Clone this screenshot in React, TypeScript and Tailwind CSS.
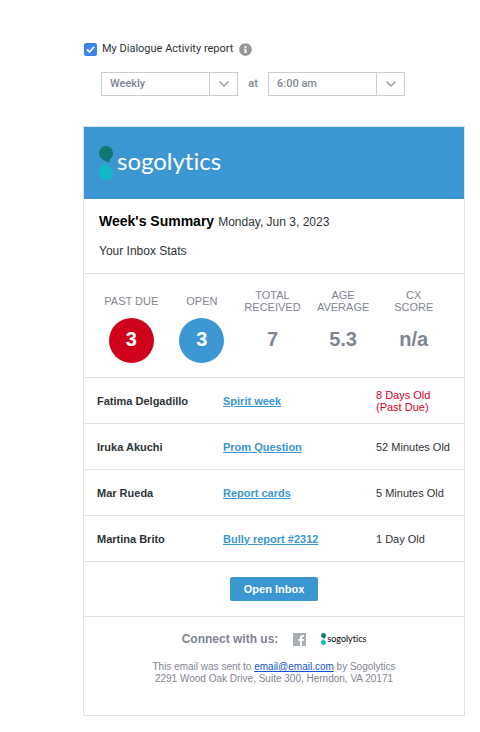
import React from "react";
import clsx from "clsx";
import { FaInfoCircle } from "react-icons/fa";

const stats = [
  { label: ["PAST DUE"], value: "3", badge: "bg-[#d0021b]" },
  { label: ["OPEN"], value: "3", badge: "bg-[#3c96d2]" },
  { label: ["TOTAL", "RECEIVED"], value: "7" },
  { label: ["AGE", "AVERAGE"], value: "5.3" },
  { label: ["CX", "SCORE"], value: "n/a" },
];

const tickets = [
  { name: "Fatima Delgadillo", subject: "Spirit week", age: "8 Days Old", pastDue: true },
  { name: "Iruka Akuchi", subject: "Prom Question", age: "52 Minutes Old" },
  { name: "Mar Rueda", subject: "Report cards", age: "5 Minutes Old" },
  { name: "Martina Brito", subject: "Bully report #2312", age: "1 Day Old" },
];

// Two speech bubbles, tails meeting in the middle
function LogoMark({ className }: { className?: string }) {
  return (
    <svg viewBox="0 0 14 34" className={className} aria-hidden="true">
      <path
        d="M7 0a7 7 0 0 1 7 7c0 3-1.400 5-3.200 6.300l-.3 3.200C7.500 16 5.200 15 3.300 13.100 1.200 11.600 0 9.600 0 7a7 7 0 0 1 7-7z"
        fill="#10786f"
      />
      <path
        d="M7 34a7 7 0 0 1-7-7c0-3 1.400-5 3.200-6.300l.3-3.200c3 .5 5.300 1.500 7.200 3.400C12.800 22.400 14 24.400 14 27a7 7 0 0 1-7 7z"
        fill="#10b9c6"
      />
    </svg>
  );
}

interface SelectProps {
  label: string;
  options: string[];
}

function Select({ label, options }: SelectProps) {
  return (
    <div className="relative w-[137px]">
      <select
        aria-label={label}
        className="block h-6 w-full appearance-none border border-[#cccccc] bg-white pl-2 pr-8 text-[11px] font-medium text-[#7f8592]"
      >
        {options.map((option) => (
          <option key={option}>{option}</option>
        ))}
      </select>
      <span className="pointer-events-none absolute inset-y-0 right-0 flex w-[29px] items-center justify-center border-l border-[#cccccc]">
        <svg viewBox="0 0 10 6" className="w-[10px]" fill="none" stroke="#8a8f99" strokeWidth="1.200">
          <path d="M.5.5 5 5 9.500.5" />
        </svg>
      </span>
    </div>
  );
}

function ReportSettings() {
  return (
    <form className="font-['Roboto',sans-serif]">
      <div className="flex h-[13px] items-center">
        <span className="relative flex">
          <input
            id="activity-report"
            type="checkbox"
            defaultChecked
            className="peer size-[13px] appearance-none rounded-xs border border-[#3b82f0] checked:bg-[#3f86ec]"
          />
          <svg
            viewBox="0 0 13 13"
            className="pointer-events-none absolute inset-0 hidden peer-checked:block"
            fill="none"
            stroke="#fff"
            strokeWidth="1.800"
          >
            <path d="M3 6.500 5.500 9 10 4" />
          </svg>
        </span>
        <label htmlFor="activity-report" className="ml-[5px] text-[11px] text-[#2d3436]">
          My Dialogue Activity report
        </label>
        <button type="button" aria-label="About this report" className="ml-[6px]">
          <FaInfoCircle className="size-[13px] text-[#979797]" />
        </button>
      </div>
      <div className="mt-4 flex items-center pl-[17px]">
        <Select label="Frequency" options={["Weekly", "Daily", "Monthly"]} />
        <span className="w-[30px] text-center text-[11px] font-medium text-[#7f8592]">at</span>
        <Select label="Time" options={["6:00 am", "7:00 am", "8:00 am"]} />
      </div>
    </form>
  );
}

export default function App() {
  return (
    <main className="bg-white pb-4 pl-[83px] pr-[15px] pt-[43px] font-['Liberation_Sans',Arial,sans-serif] text-[#2d3436]">
      <div className="pl-px">
        <ReportSettings />
      </div>

      <article className="mt-[30px] border border-[#e1e1e1]">
        {/* Brand header */}
        <header className="flex h-[72px] items-center gap-1 bg-[#3c96d2] pl-[15px]">
          <LogoMark className="h-[34px] w-[14px]" />
          <span className="pb-1 font-['Lato',sans-serif] text-2xl text-white [font-variant-ligatures:none]">
            sogolytics
          </span>
        </header>

        <section className="h-[75px] border-b border-[#e1e1e1] pl-[15px] pt-3">
          <div className="flex items-baseline gap-1">
            <h1 className="text-sm font-bold text-black">Week's Summary</h1>
            <time className="text-xs">Monday, Jun 3, 2023</time>
          </div>
          <p className="mt-3 text-xs">Your Inbox Stats</p>
        </section>

        {/* Inbox totals */}
        <dl className="grid h-[104px] grid-cols-5 border-b border-[#e1e1e1] pl-3 pr-[15px] pt-[15px] text-center text-[#7f8592]">
          {stats.map((stat) => (
            <div key={stat.label.join(" ")} className="flex flex-col items-center gap-[5px]">
              <dt className="flex h-6 flex-col justify-center text-[11px] leading-3">
                {stat.label.map((line) => (
                  <span key={line}>{line}</span>
                ))}
              </dt>
              <dd
                className={clsx(
                  "flex size-[45px] items-center justify-center rounded-full pb-[3px] text-xl font-bold",
                  stat.badge && "text-white",
                  stat.badge
                )}
              >
                {stat.value}
              </dd>
            </div>
          ))}
        </dl>

        <table className="w-full table-fixed border-separate border-spacing-0 text-left text-[11px] leading-3">
          <tbody>
            {tickets.map((ticket) => (
              <tr key={ticket.name} className="h-[46px]">
                <th scope="row" className="w-[139px] border-b border-[#e1e1e1] pl-[13px] font-bold">
                  {ticket.name}
                </th>
                <td className="border-b border-[#e1e1e1] font-bold">
                  <a href="#" className="text-[#3c96d2] underline">
                    {ticket.subject}
                  </a>
                </td>
                <td className={clsx("w-[88px] border-b border-[#e1e1e1]", ticket.pastDue && "text-[#d0021b]")}>
                  {ticket.age}
                  {ticket.pastDue && <span className="block">(Past Due)</span>}
                </td>
              </tr>
            ))}
          </tbody>
        </table>

        <div className="flex h-[55px] items-center justify-center border-b border-[#e1e1e1]">
          <button type="button" className="h-6 rounded-xs bg-[#3c96d2] px-[14px] text-[11px] font-bold text-white">
            Open Inbox
          </button>
        </div>

        {/* Social links and address */}
        <footer className="h-[98px] pt-3 text-center text-[#7f8592]">
          <div className="flex h-5 items-center justify-center">
            <p className="text-xs font-bold">Connect with us:</p>
            <a href="#" aria-label="Facebook" className="ml-[15px]">
              <svg viewBox="0 0 13 13" className="size-[13px]">
                <path d="M0 0h13v13H0z" fill="#a8aeb6" />
                <path d="M7 13V8H5.500V6H7V4.600C7 2.900 8 2 9.600 2H11v1.900h-1c-.8 0-1 .3-1 1V6h2l-.3 2H9v5z" fill="#fff" />
              </svg>
            </a>
            <a
              href="#"
              className="ml-[15px] flex items-center gap-px font-['Lato',sans-serif] text-[9px] leading-3 text-black [font-variant-ligatures:none]"
            >
              <LogoMark className="h-3 w-[5px]" />
              sogolytics
            </a>
          </div>
          <p className="mt-3 text-[10px] leading-3">
            This email was sent to{" "}
            <a href="mailto:email@email.com" className="text-[#1155cc] underline">
              email@email.com
            </a>{" "}
            by Sogolytics
            <br />
            2291 Wood Oak Drive, Suite 300, Herndon, VA 20171
          </p>
        </footer>
      </article>
    </main>
  );
}
